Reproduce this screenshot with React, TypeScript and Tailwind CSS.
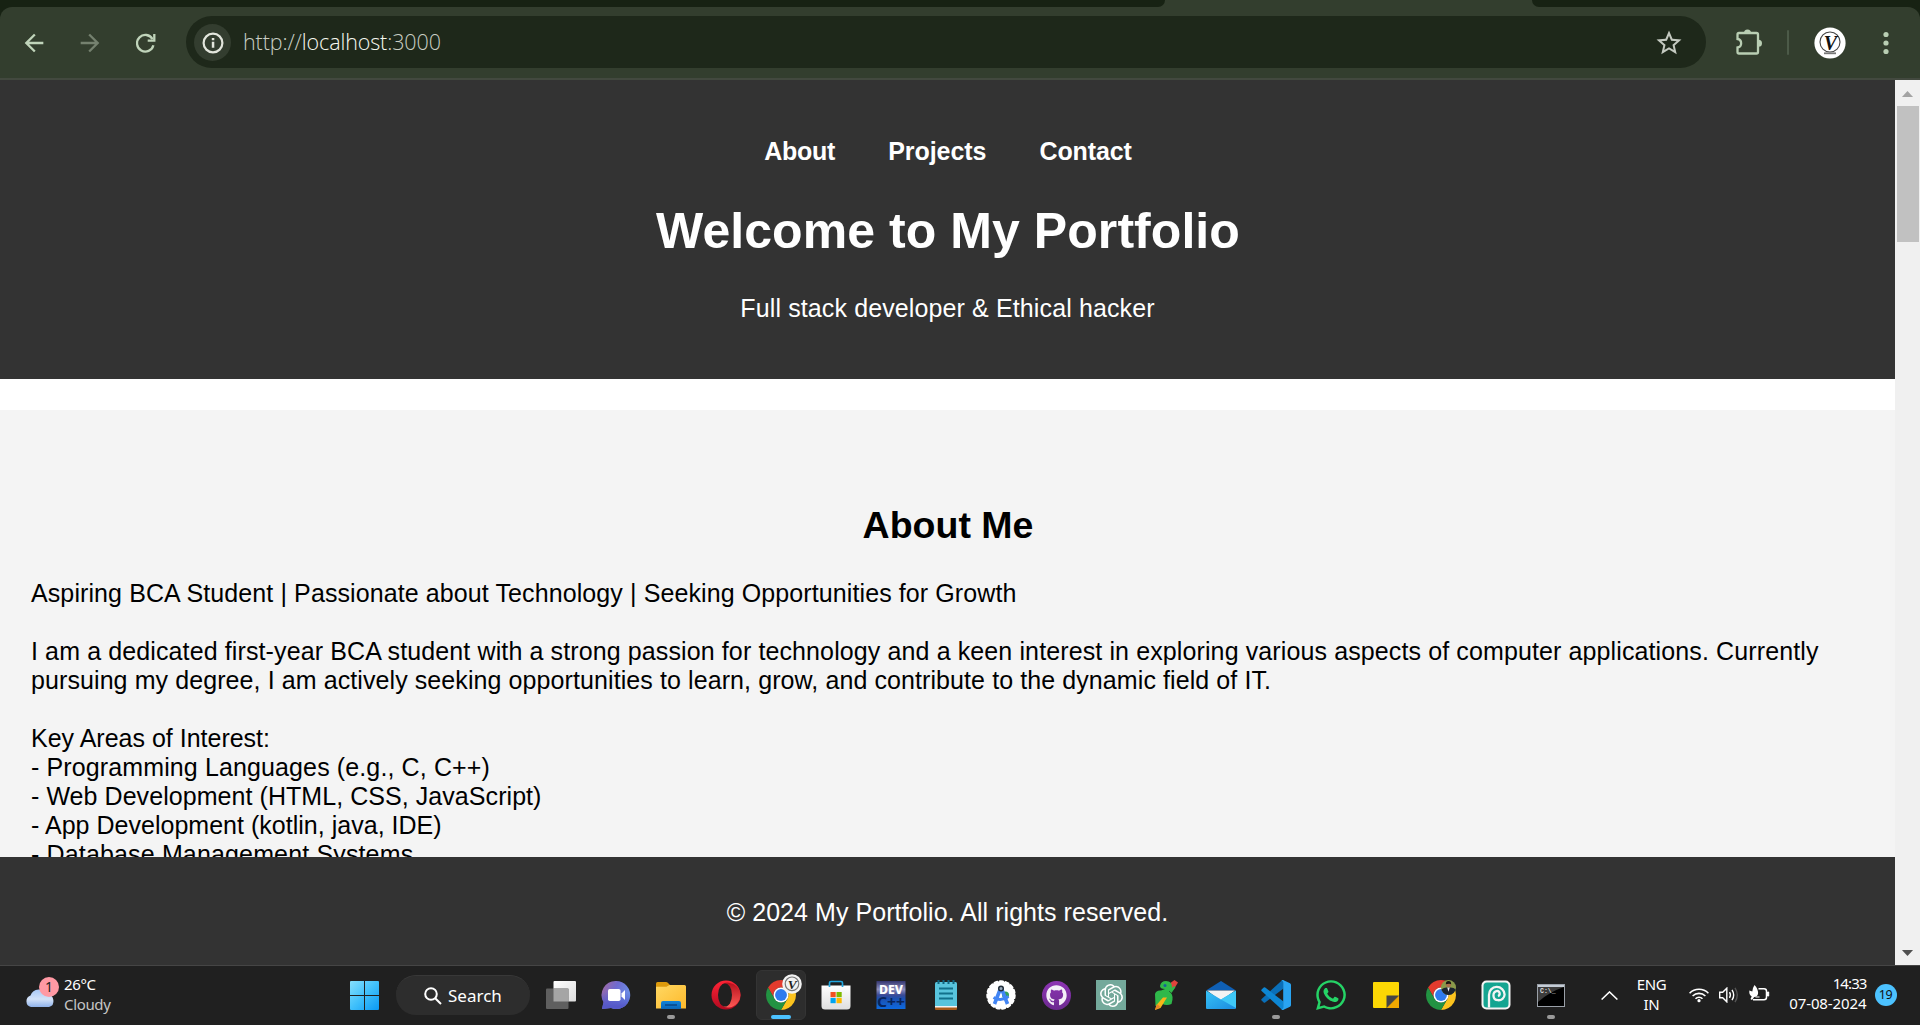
import type { ReactNode } from "react";
import { FaGithub, FaWhatsapp } from "react-icons/fa";
import { SiOpenai } from "react-icons/si";

function BrowserBar() {
  return (
    <div className="flex h-[80px] flex-col bg-[#172213]">
      <div className="flex h-[7px] bg-[#333e2e]">
        <div className="w-[1165px] rounded-br-[10px] bg-[#172213]" />
        <div className="w-[367px]" />
        <div className="flex-1 rounded-bl-[10px] bg-[#172213]" />
      </div>
      <div className="flex h-[73px] rounded-t-xl border-b-2 border-[#43493f] bg-[#333e2e] pt-[9px]">
        <div className="flex h-[52px] w-full items-center">
          <svg viewBox="0 0 24 24" className="mt-px ml-[20px] size-7 shrink-0 fill-[#c0d4ba]">
            <path d="M20 11H7.83l5.59-5.59L12 4l-8 8 8 8 1.41-1.41L7.83 13H20v-2z" />
          </svg>
          <svg viewBox="0 0 24 24" className="mt-px ml-[28px] size-7 shrink-0 fill-[#75816f]">
            <path d="M12 4l-1.41 1.41L16.17 11H4v2h12.17l-5.58 5.59L12 20l8-8z" />
          </svg>
          <svg viewBox="0 0 20 20" className="mt-px ml-[32px] size-5 shrink-0 fill-none stroke-[#c0d4ba] stroke-[2.3]">
            <path d="M17.4 12.2A8.3 8.3 0 1 1 16.6 6.2" />
            <path d="M18.3 1v6.6h-6.6" />
          </svg>
          <div className="ml-[30px] flex h-[52px] w-[1520px] shrink-0 items-center rounded-full bg-[#1e281a]">
            <div className="mt-px ml-2 flex size-[37px] items-center justify-center rounded-full bg-[#333d2f]">
              <svg viewBox="0 0 22 22" className="size-[22px]">
                <circle cx="11" cy="11" r="9.4" fill="none" stroke="#e3e6dd" strokeWidth="2.2" />
                <path d="M9.8 9.8h2.5v6H9.8zM9.8 6h2.5v2.3H9.8z" fill="#e3e6dd" />
              </svg>
            </div>
            <div className="ml-[12px] font-['Open_Sans',sans-serif] text-[21.5px] leading-[30px] font-light tracking-[-0.12px] text-[#c9cec4]">
              http://<span className="text-[#f6f8f0]">localhost</span>:3000
            </div>
            <svg viewBox="0 0 24 24" className="mt-px mr-[22px] ml-auto size-[30px] fill-[#c4c9c0]">
              <path d="M22 9.24l-7.19-.62L12 2 9.19 8.63 2 9.24l5.46 4.73L5.82 21 12 17.27 18.18 21l-1.63-7.03L22 9.24zM12 15.4l-3.76 2.27 1-4.28-3.32-2.88 4.38-.38L12 6.1l1.71 4.04 4.38.38-3.32 2.88 1 4.28L12 15.4z" />
            </svg>
          </div>
          <svg viewBox="0 0 28 30" className="ml-[27.5px] h-[30px] w-7 shrink-0">
            <path d="M3.5 7.5q0-1.5 1.5-1.5H22.500q1.500 0 1.500 1.500V25q0 1.500-1.500 1.500H5Q3.500 26.500 3.500 25v-4.500a4.300 4.300 0 0 0 0-8.500z" fill="none" stroke="#b9ceb3" strokeWidth="2.3" />
            <path d="M10 6a3.500 3.500 0 0 1 7 0zM24.500 12.800a3.500 3.500 0 0 1 0 7z" fill="#b9ceb3" />
          </svg>
          <div className="ml-[25.5px] h-[25px] w-[2px] rounded bg-[#4c5a48]" />
          <svg viewBox="0 0 32 32" className="mt-px ml-[25px] size-8 shrink-0">
            <circle cx="16" cy="16" r="15.6" fill="#fff" />
            <circle cx="16" cy="15" r="10" fill="none" stroke="#444" strokeWidth="1.100" />
            <text x="16.500" y="22.500" textAnchor="middle" fontFamily="Liberation Serif" fontWeight="700" fontStyle="italic" fontSize="20" fill="#111">V</text>
            <path d="M10 26.300h12" stroke="#777" strokeWidth="1.800" />
          </svg>
          <svg viewBox="0 0 8 26" className="mt-px ml-[36px] h-[26px] w-2 shrink-0 fill-[#b9ceb3]">
            <circle cx="4" cy="4.500" r="2.600" />
            <circle cx="4" cy="13" r="2.600" />
            <circle cx="4" cy="21.500" r="2.600" />
          </svg>
        </div>
      </div>
    </div>
  );
}

function Portfolio() {
  return (
    <div className="flex h-[885px] w-[1895px] flex-col overflow-hidden bg-white font-['Liberation_Sans',Arial,sans-serif] text-[25px] leading-[29px]">
      <header className="flex h-[299px] shrink-0 flex-col items-center bg-[#333333] pt-[57px] text-white">
        <nav className="flex h-[29px] gap-[53px] pl-px font-bold">
          <a className="tracking-[-0.25px]">About</a>
          <a className="tracking-[-0.05px]">Projects</a>
          <a className="tracking-[-0.1px]">Contact</a>
        </nav>
        <h1 className="mt-[36px] pl-px text-[50px] leading-[58px] font-bold tracking-[0.06px]">Welcome to My Portfolio</h1>
        <p className="mt-[34px] tracking-[0.12px]">Full stack developer &amp; Ethical hacker</p>
      </header>
      <section className="mt-[31px] h-[447px] shrink-0 overflow-hidden bg-[#f4f4f4] px-[31px] pt-[94px] text-black">
        <h2 className="pl-px text-center text-[37.5px] leading-[43px] font-bold">About Me</h2>
        <div className="mt-[32px] whitespace-nowrap">
          <p className="tracking-[0.1px]">Aspiring BCA Student | Passionate about Technology | Seeking Opportunities for Growth</p>
          <p className="mt-[29px] tracking-[0.115px]">
            I am a dedicated first-year BCA student with a strong passion for technology and a keen interest in exploring various aspects of computer applications. Currently
          </p>
          <p className="tracking-[0.09px]">pursuing my degree, I am actively seeking opportunities to learn, grow, and contribute to the dynamic field of IT.</p>
          <p className="mt-[29px]">Key Areas of Interest:</p>
          <p className="tracking-[0.12px]">- Programming Languages (e.g., C, C++)</p>
          <p className="tracking-[0.06px]">- Web Development (HTML, CSS, JavaScript)</p>
          <p className="tracking-[0.02px]">- App Development (kotlin, java, IDE)</p>
          <p className="tracking-[0.15px]">- Database Management Systems</p>
        </div>
      </section>
      <footer className="flex h-[108px] shrink-0 justify-center bg-[#333333] pt-[41px] text-white">
        <p className="tracking-[0.05px]">© 2024 My Portfolio. All rights reserved.</p>
      </footer>
    </div>
  );
}

function Scrollbar() {
  return (
    <div className="flex h-[885px] w-[25px] flex-col items-center bg-[#f0f0f0]">
      <svg viewBox="0 0 13 7" className="mt-[11px] h-[6px] w-[13px] fill-[#a3a3a3]">
        <path d="M6.500 0 13 7H0z" />
      </svg>
      <div className="mt-[9px] h-[136px] w-[22px] bg-[#c1c1c1]" />
      <svg viewBox="0 0 13 7" className="mt-auto mb-[9px] h-[6px] w-[13px] fill-[#505050]">
        <path d="M6.500 7 13 0H0z" />
      </svg>
    </div>
  );
}

function Chrome({ children }: { children?: ReactNode }) {
  return (
    <div className="relative size-[30px]">
      <svg viewBox="0 0 48 48" className="size-[30px]">
        <path fill="#e33b2e" d="M3.220 12A24 24 0 0 1 44.780 12H24A12 12 0 0 0 13.610 30Z" />
        <path fill="#fcc31e" d="M44.780 12A24 24 0 0 1 24 48L34.390 30A12 12 0 0 0 24 12Z" />
        <path fill="#229342" d="M3.220 12A24 24 0 0 0 24 48L34.390 30A12 12 0 0 1 13.610 30Z" />
        <circle cx="24" cy="24" r="12" fill="#fff" />
        <circle cx="24" cy="24" r="9.500" fill="#2f7bee" />
      </svg>
      {children}
    </div>
  );
}

const TaskView = () => (
  <svg viewBox="0 0 30 28" className="h-7 w-[30px]">
    <defs>
      <linearGradient id="tv" x1="0" y1="0" x2="1" y2="1"><stop stopColor="#fff" /><stop offset="1" stopColor="#dcdcdc" /></linearGradient>
    </defs>
    <rect x="7.500" y="0" width="22.500" height="20.500" rx="1" fill="url(#tv)" />
    <rect x="0" y="7.500" width="22.500" height="20.500" rx="1" fill="#5f5f5f" />
    <rect x="7.500" y="7.500" width="15" height="13" fill="#a5a5a5" />
  </svg>
);

const Chat = () => (
  <svg viewBox="0 0 30 30" className="size-[30px]">
    <defs>
      <linearGradient id="ch" x1="0" y1=".1" x2="1" y2=".6"><stop stopColor="#a3689f" /><stop offset=".45" stopColor="#6f6bd0" /><stop offset="1" stopColor="#6c95ea" /></linearGradient>
      <linearGradient id="ch2" x1="0" y1="0" x2="0" y2="1"><stop offset=".4" stopColor="#5558c8" stopOpacity="0" /><stop offset=".9" stopColor="#5558c8" /></linearGradient>
    </defs>
    <path d="M15 1a14 14 0 1 1-5 27L1 29 2.500 22A14 14 0 0 1 15 1z" fill="url(#ch)" />
    <path d="M15 1a14 14 0 1 1-5 27L1 29 2.500 22A14 14 0 0 1 15 1z" fill="url(#ch2)" />
    <rect x="7" y="9" width="12.500" height="12" rx="1.800" fill="#fff" />
    <path d="M20.500 13.500 24 10v10l-3.500-3.500z" fill="#fff" />
  </svg>
);

const Folder = () => (
  <svg viewBox="0 0 30 27" className="h-[27px] w-[30px]">
    <defs>
      <linearGradient id="fo" x1="0" y1="0" x2="1" y2="1"><stop stopColor="#ffd863" /><stop offset="1" stopColor="#fdb92b" /></linearGradient>
      <linearGradient id="fb" x1="0" y1="0" x2="0" y2="1"><stop stopColor="#1283d8" /><stop offset="1" stopColor="#0a66b8" /></linearGradient>
    </defs>
    <path d="M0 1.500Q0 0 1.500 0H10q1 0 1.800.8L14.500 3.500V10H0z" fill="#dd9a0c" />
    <path d="M0 4.800h10.500l3-1.800h15Q30 3 30 4.500V26.500H0z" fill="url(#fo)" />
    <path d="M5 21q0-2 2-2h16q2 0 2 2v6H5z" fill="url(#fb)" />
    <path d="M9 23h12" stroke="#083f7c" strokeWidth="1.300" />
  </svg>
);

const Opera = () => (
  <svg viewBox="0 0 30 30" className="size-[30px]">
    <defs>
      <linearGradient id="op" x1="0" y1="0" x2="0" y2="1"><stop stopColor="#ff2436" /><stop offset="1" stopColor="#b10a20" /></linearGradient>
      <linearGradient id="op2" x1="0" y1="0" x2="0" y2="1"><stop stopColor="#b4101c" /><stop offset="1" stopColor="#ff5a55" /></linearGradient>
    </defs>
    <circle cx="15" cy="15" r="14.500" fill="url(#op)" />
    <path d="M11 4.500Q14 2 18 2.800A13 13 0 0 1 29.500 15 13 13 0 0 1 18 27.500Q14 28 11 25.500z" fill="url(#op2)" />
    <ellipse cx="14" cy="15" rx="7" ry="11.500" fill="#202020" />
  </svg>
);

const Store = () => (
  <svg viewBox="0 0 30 30" className="size-[30px]">
    <defs>
      <linearGradient id="st" x1="0" y1="0" x2="0" y2="1"><stop stopColor="#fff" /><stop offset="1" stopColor="#dfdfdf" /></linearGradient>
    </defs>
    <path d="M.500 5.500h29V26q0 3.500-3.500 3.500H4Q.500 29.500.500 26z" fill="url(#st)" />
    <path d="M8.500 7V3q0-1.500 1.500-1.500h10q1.500 0 1.500 1.500v4" fill="none" stroke="#22a7e0" strokeWidth="1.700" />
    <path fill="#f25022" d="M9.500 12h5.200v5.200H9.500z" />
    <path fill="#7fba00" d="M15.500 12h5.200v5.200h-5.200z" />
    <path fill="#00a4ef" d="M9.500 18h5.200v5.200H9.500z" />
    <path fill="#ffb900" d="M15.500 18h5.200v5.200h-5.200z" />
  </svg>
);

const DevCpp = () => (
  <svg viewBox="0 0 30 28" className="h-7 w-[30px]">
    <defs>
      <linearGradient id="dv" x1="0" y1="0" x2="0" y2="1">
        <stop stopColor="#33356f" /><stop offset=".3" stopColor="#8f90bd" /><stop offset=".5" stopColor="#3b4a96" /><stop offset=".62" stopColor="#1d4fae" /><stop offset="1" stopColor="#0d6ae0" />
      </linearGradient>
    </defs>
    <rect x=".500" width="29" height="28" fill="url(#dv)" />
    <text x="15" y="13" textAnchor="middle" fontFamily="Noto Sans" fontWeight="800" fontSize="12.500" textLength="24" lengthAdjust="spacingAndGlyphs" fill="#fff">DEV</text>
    <text x="15" y="26" textAnchor="middle" fontFamily="Noto Sans" fontWeight="700" fontSize="14" textLength="28" lengthAdjust="spacingAndGlyphs" fill="#08255c">C++</text>
  </svg>
);

const Notepad = () => (
  <svg viewBox="0 0 22 30" className="h-[30px] w-[22px]">
    <rect y="26" width="22" height="4" rx="1" fill="#a85a1a" />
    <rect y="24" width="22" height="3.500" fill="#f3f3f3" />
    <path d="M0 3.500Q0 2 1.500 2h19Q22 2 22 3.500V26H0z" fill="#58c4dd" />
    <path d="M3.500 0v4M8.500 0v4M13.500 0v4M18.500 0v4" stroke="#0f6480" strokeWidth="2" />
    <path d="M4 8.500h14M4 13.500h14M4 18.500h14" stroke="#11708c" strokeWidth="1.800" />
  </svg>
);

const AndroidStudio = () => (
  <svg viewBox="0 0 30 30" className="size-[30px]">
    <circle cx="15" cy="15" r="13.800" fill="#fff" />
    <circle cx="15" cy="15" r="13.600" fill="none" stroke="#fff" strokeWidth="2.200" strokeDasharray="3 2.700" strokeLinecap="round" />
    <circle cx="19.500" cy="15" r="3.500" fill="#34a05a" />
    <path d="M14.300 9 8.500 24M15.700 9l5.800 15" stroke="#4285f4" strokeWidth="3.600" />
    <path d="M7.500 17.500q7.500 4.500 15-1" fill="none" stroke="#4285f4" strokeWidth="2.800" />
    <circle cx="15" cy="8.500" r="2.300" fill="#9ab" stroke="#222f3a" strokeWidth="1.500" />
  </svg>
);

const Github = () => (
  <div className="flex size-[29px] items-center justify-center rounded-full bg-linear-to-b from-[#8e35b4] to-[#6c2a90]">
    <FaGithub className="size-[21px] text-[#f4eff8]" />
  </div>
);

const ChatGpt = () => (
  <div className="flex size-[30px] items-center justify-center bg-[#74a99b]">
    <SiOpenai className="size-[23px] text-white" />
  </div>
);

const Parrot = () => (
  <svg viewBox="0 0 24 30" className="h-[30px] w-6">
    <path d="M17 2.500 20.500 0 24 2.500 20 9l-4 3z" fill="#e0433c" />
    <path d="M6 6Q7 1 12 1q6 0 6 6 0 3-3 4.500 4 2 3.500 8l-1 4.500q-5 2-9 0L1.500 26 1 14q1-4 6-3.500l4-1.500Q6 9 6 6z" fill="#2fb84a" />
    <path d="M15 10.500 20 6l1.500 1-4 6z" fill="#2fb84a" />
    <circle cx="11" cy="5.500" r="1.500" fill="#17609a" />
    <path d="M9 17.500h4L6.500 28 1 30l1.500-5z" fill="#f7b518" />
    <path d="M3 24l3.500 3L1 30z" fill="#e8862b" />
  </svg>
);

const Mail = () => (
  <svg viewBox="0 0 30 28" className="h-7 w-[30px]">
    <defs>
      <linearGradient id="ma" x1="0" y1="0" x2="1" y2="1"><stop stopColor="#37c3f5" /><stop offset="1" stopColor="#1b8be0" /></linearGradient>
    </defs>
    <path d="M0 9.500 15 0l15 9.500z" fill="#0f5fb4" />
    <path d="M1 9.500h28L15 20z" fill="#f3f3f3" />
    <path d="M0 9.500 15 18.500 30 9.500V27q0 1-1 1H1q-1 0-1-1z" fill="url(#ma)" />
    <path d="M30 9.500V27L15 18.500z" fill="#3fc8f6" />
  </svg>
);

const VsCode = () => (
  <svg viewBox="0 0 30 30" className="size-[30px]">
    <path d="M22.500 0v8.500L4.200 22.400q-.800.600-1.500 0L.600 20.500q-.800-.800 0-1.600L20.500.8z" fill="#0a6fb8" />
    <path d="M22.500 30v-8.500L4.200 7.600q-.800-.600-1.500 0L.600 9.500q-.800.800 0 1.600L20.500 29.200z" fill="#0d86d3" />
    <path d="M22 0l7 3.300q1 .500 1 1.600v20.200q0 1.100-1 1.600L22 30q-1 .100-1.800-.900 2 .400 2-1.600v-25q0-2-2-1.600Q21-.100 22 0z" fill="#29a4f2" />
  </svg>
);

const Sticky = () => (
  <svg viewBox="0 0 26 26" className="size-[26px]">
    <path d="M0 1q0-1 1-1h24q1 0 1 1v12.500L13.500 26H1q-1 0-1-1z" fill="#fcd704" />
    <path d="M26 13.500V26H13.500z" fill="#f0a800" />
    <path d="M13.500 26V13.500H26z" fill="#454545" />
  </svg>
);

const Photopea = () => (
  <svg viewBox="0 0 30 30" className="size-[30px]">
    <rect x=".500" y=".500" width="29" height="29" rx="5" fill="#f4f4f4" />
    <rect x="2.500" y="2.500" width="25" height="25" rx="3.500" fill="#14a591" />
    <path d="M8 27.500V15a7.800 7.800 0 0 1 15.600-.5 6 6 0 0 1-6.600 5.700 4.700 4.700 0 0 1-.8-9.300 2.700 2.700 0 0 1 .8 5.200" fill="none" stroke="#f4f4f4" strokeWidth="2.300" />
  </svg>
);

const Cmd = () => (
  <svg viewBox="0 0 28 23" className="h-[23px] w-7">
    <rect x=".500" y=".500" width="27" height="22" fill="#000" stroke="#9aa0a8" />
    <path d="M1 1h26v2H1z" fill="#c4ccd6" />
    <path d="M1 3h26Q12 8 1 18z" fill="#3c3c3c" />
    <text x="3" y="8.500" fontFamily="Liberation Mono" fontWeight="700" fontSize="6.500" fill="#ddd">C:\_</text>
  </svg>
);

const apps: { name: string; icon: ReactNode; state?: "open" | "active" }[] = [
  { name: "Task view", icon: <TaskView /> },
  { name: "Chat", icon: <Chat /> },
  { name: "Explorer", icon: <Folder />, state: "open" },
  { name: "Opera", icon: <Opera /> },
  {
    name: "Chrome",
    icon: (
      <Chrome>
        <svg viewBox="0 0 20 20" className="absolute -top-[6px] left-[16px] size-5">
          <circle cx="10" cy="10" r="9.800" fill="#f2f2f2" />
          <circle cx="10" cy="9.800" r="6.800" fill="none" stroke="#777" strokeWidth="1.200" />
          <text x="10.300" y="14.600" textAnchor="middle" fontFamily="Liberation Serif" fontWeight="700" fontStyle="italic" fontSize="13.500" fill="#222">V</text>
        </svg>
      </Chrome>
    ),
    state: "active",
  },
  { name: "Store", icon: <Store /> },
  { name: "Dev-C++", icon: <DevCpp /> },
  { name: "Notepad", icon: <Notepad /> },
  { name: "Android Studio", icon: <AndroidStudio /> },
  { name: "GitHub", icon: <Github /> },
  { name: "ChatGPT", icon: <ChatGpt /> },
  { name: "Parrot", icon: <Parrot /> },
  { name: "Mail", icon: <Mail /> },
  { name: "VS Code", icon: <VsCode />, state: "open" },
  { name: "WhatsApp", icon: <FaWhatsapp className="size-[34px] shrink-0 text-[#25d366]" /> },
  { name: "Sticky Notes", icon: <Sticky /> },
  {
    name: "Chrome profile",
    icon: (
      <Chrome>
        <svg viewBox="0 0 14 14" className="absolute top-0 left-[15px] size-[15px]">
          <defs><clipPath id="pf"><circle cx="7" cy="7" r="7" /></clipPath></defs>
          <g clipPath="url(#pf)">
            <rect width="14" height="14" fill="#8a9a4a" />
            <path d="M0 14V9q3-2 5-2h4q3 0 5 2v5z" fill="#1b2430" />
            <path d="M5.800 7h2.400L7 11z" fill="#e8e8e8" />
            <circle cx="7" cy="4.300" r="2.400" fill="#a8714c" />
            <path d="M4.500 4Q4.500 1 7 1t2.500 3Q8 2.800 4.500 4z" fill="#1a1512" />
          </g>
        </svg>
      </Chrome>
    ),
  },
  { name: "Photopea", icon: <Photopea /> },
  { name: "Terminal", icon: <Cmd />, state: "open" },
];

function Taskbar() {
  return (
    <div className="flex h-[60px] items-center border-t border-[#454545] bg-[#202020] pb-px pl-[25px] font-['Noto_Sans',sans-serif] text-[15px] leading-5 text-white">
      <div className="flex w-[325px] items-center pb-[3px]">
        <div className="mb-[3px] h-[30px] w-[39px]">
          <div className="relative h-[30px] w-[34px]">
            <svg viewBox="0 0 30 19" className="absolute bottom-0 left-0 h-[19px] w-[30px]">
              <defs>
                <linearGradient id="cl" x1="0" y1="0" x2="0" y2="1"><stop stopColor="#a9c8f5" /><stop offset=".55" stopColor="#d3e2f8" /><stop offset="1" stopColor="#8fb2ea" /></linearGradient>
              </defs>
              <path d="M6 19a6 6 0 0 1-.500-11.500A9 9 0 0 1 22 6.500 6.400 6.400 0 0 1 24 19z" fill="url(#cl)" />
            </svg>
            <div className="absolute top-0 left-[14px] flex size-5 items-center justify-center rounded-full bg-[#ff99a4] text-[14px] text-[#222]">1</div>
          </div>
        </div>
        <div className="tracking-[-0.35px]">
          <div>26°C</div>
          <div className="text-[#c5c5c5]">Cloudy</div>
        </div>
      </div>
      <svg viewBox="0 0 29 29" className="size-[29px] shrink-0">
        <defs>
          <linearGradient id="wn" x1="0" y1="0" x2="1" y2="1"><stop stopColor="#86e0fc" /><stop offset=".5" stopColor="#40c0fb" /><stop offset="1" stopColor="#0a98f5" /></linearGradient>
        </defs>
        <path d="M0 1q0-1 1-1h13v14H0zM15 0h13q1 0 1 1v13H15zM0 15h14v14H1q-1 0-1-1zM15 15h14v13q0 1-1 1H15z" fill="url(#wn)" />
      </svg>
      <div className="ml-[17px] flex h-10 w-[134px] shrink-0 items-center rounded-full border-t border-[#383838] bg-[#2d2d2d] pl-7">
        <svg viewBox="0 0 18 18" className="size-[18px] fill-none stroke-white stroke-2">
          <circle cx="7" cy="7" r="5.800" />
          <path d="M11.200 11.200 17 17" />
        </svg>
        <span className="ml-[6px] text-[17px]">Search</span>
      </div>
      <div className="ml-[3.5px] flex">
        {apps.map((app) => (
          <div
            key={app.name}
            className={
              app.state === "active"
                ? "relative mx-[2.5px] flex size-[50px] items-center justify-center rounded-md border border-[#343434] bg-[#2d2d2d]"
                : "relative flex h-[50px] w-[55px] items-center justify-center"
            }
          >
            {app.icon}
            {app.state === "open" && <span className="absolute bottom-[1px] left-1/2 h-1 w-2 -translate-x-1/2 rounded-full bg-[#9a9a9a]" />}
            {app.state === "active" && <span className="absolute bottom-0 left-1/2 h-1 w-5 -translate-x-1/2 rounded-full bg-[#4cc2ff]" />}
          </div>
        ))}
      </div>
      <svg viewBox="0 0 17 9" className="ml-[22px] h-[9px] w-[17px] shrink-0 fill-none stroke-white stroke-[1.5]">
        <path d="M.600 8.500 8.500.900 16.400 8.500" />
      </svg>
      <div className="ml-[14px] w-10 pb-[3px] text-center tracking-[-0.35px]">
        <div>ENG</div>
        <div>IN</div>
      </div>
      <svg viewBox="0 0 20 16" className="ml-[17px] h-4 w-5 shrink-0 fill-none stroke-white stroke-[1.6]">
        <path d="M.600 6.200a13.300 13.300 0 0 1 18.800 0M3.600 9a9.100 9.100 0 0 1 12.800 0M6.500 11.800a5 5 0 0 1 7 0" />
        <circle cx="10" cy="13.700" r="1.600" fill="#fff" stroke="none" />
      </svg>
      <svg viewBox="0 0 20 16" className="ml-[10px] h-4 w-5 shrink-0 fill-none stroke-white stroke-[1.4]">
        <path d="M.700 5.300h3L7.800 1.200v13.600L3.700 10.700h-3z" />
        <path d="M10.500 5.200q1.800 2.800 0 5.600M13 2.800q3.400 5.200 0 10.400" />
        <path d="M16 .800q4.600 7.200 0 14.400" stroke="#555" />
      </svg>
      <svg viewBox="0 0 21 18" className="mb-[2px] ml-[10px] h-[18px] w-[21px] shrink-0">
        <path d="M9.500 3.700H15q2.500 0 2.500 2.500v6q0 2.500-2.500 2.500H4" fill="none" stroke="#fff" strokeWidth="1.500" />
        <path d="M18.500 7h1.200v4h-1.200z" fill="#fff" stroke="#fff" />
        <path d="M5.500 0Q9.500 4 9 9q-.800 3-3.800 3L3 15 1.500 14l1.200-2.400Q0 10 .300 5.500l3 1Q3.500 3 5.500 0z" fill="#fff" />
        <path d="M6.500 12h4" stroke="#fff" strokeWidth="1" />
      </svg>
      <div className="w-[97px] pb-[4px] text-right whitespace-nowrap">
        <div className="tracking-[-0.9px]">14:33</div>
        <div className="tracking-[-0.1px]">07-08-2024</div>
      </div>
      <div className="ml-2 flex size-[22px] shrink-0 items-center justify-center rounded-full bg-[#4cc2ff] pb-px text-[12.5px] tracking-[-0.5px] text-[#111]">19</div>
    </div>
  );
}

export default function App() {
  return (
    <div className="h-[1025px] w-[1920px] overflow-hidden">
      <BrowserBar />
      <div className="flex">
        <Portfolio />
        <Scrollbar />
      </div>
      <Taskbar />
    </div>
  );
}
